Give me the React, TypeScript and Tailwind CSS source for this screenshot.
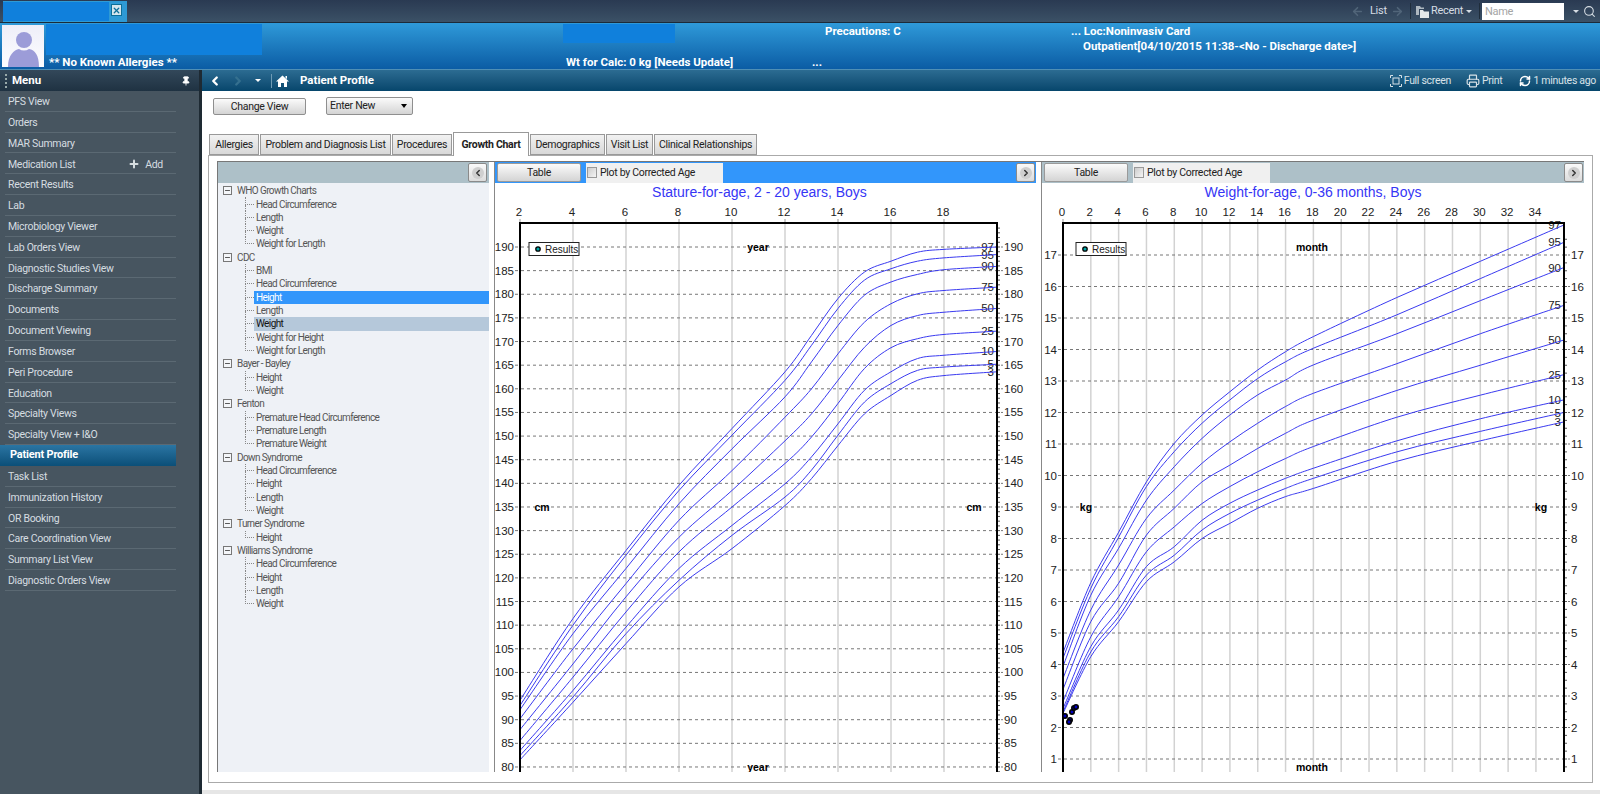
import { ChevronLeft, ChevronRight, Search, Printer, RefreshCw, Pin, ArrowLeft, ArrowRight, Plus, Minus, X } from "lucide-react";

const uiFont = { fontFamily: "Roboto, 'Liberation Sans', sans-serif" };

const menuItems = [
  "PFS View", "Orders", "MAR Summary", "Medication List", "Recent Results", "Lab", "Microbiology Viewer",
  "Lab Orders View", "Diagnostic Studies View", "Discharge Summary", "Documents", "Document Viewing",
  "Forms Browser", "Peri Procedure", "Education", "Specialty Views", "Specialty View + I&O", "Patient Profile",
  "Task List", "Immunization History", "OR Booking", "Care Coordination View", "Summary List View", "Diagnostic Orders View",
];

const tabs = [
  { label: "Allergies", w: "w-[50px]" },
  { label: "Problem and Diagnosis List", w: "w-[131px]" },
  { label: "Procedures", w: "w-[60px]" },
  { label: "Growth Chart", w: "w-[76px]", active: true },
  { label: "Demographics", w: "w-[75px]" },
  { label: "Visit List", w: "w-[47px]" },
  { label: "Clinical Relationships", w: "w-[103px]" },
];

const tree = [
  { name: "WHO Growth Charts", items: ["Head Circumference", "Length", "Weight", "Weight for Length"] },
  { name: "CDC", items: ["BMI", "Head Circumference", "Height", "Length", "Weight", "Weight for Height", "Weight for Length"] },
  { name: "Bayer - Bayley", items: ["Height", "Weight"] },
  { name: "Fenton", items: ["Premature Head Circumference", "Premature Length", "Premature Weight"] },
  { name: "Down Syndrome", items: ["Head Circumference", "Height", "Length", "Weight"] },
  { name: "Turner Syndrome", items: ["Height"] },
  { name: "Williams Syndrome", items: ["Head Circumference", "Height", "Length", "Weight"] },
];

const range = (from: number, to: number, step: number) => {
  const out: number[] = [];
  for (let v = from; v <= to; v += step) out.push(v);
  return out;
};

type Curve = { label: string; values: number[] };

type ChartConfig = {
  left: number;
  right: number;
  xMin: number;
  xScale: number;
  xTicks: number[];
  yRef: number;
  yRefPx: number;
  yScale: number;
  yTicks: number[];
  yMinor: number[];
  ages: number[];
  curves: Curve[];
  xUnit: string;
  xUnitPos: number;
  yUnit: string;
  yUnitLeft: number;
  yUnitRight: number;
  legendX: number;
  viewX: number;
  viewW: number;
  dots?: number[][];
};

// percentile values read off the chart
const stature: ChartConfig = {
  left: 519,
  right: 996,
  xMin: 2,
  xScale: 26.5,
  xTicks: range(2, 18, 2),
  yRef: 190,
  yRefPx: 247,
  yScale: 4.727,
  yTicks: range(80, 190, 5),
  yMinor: range(79, 194, 1),
  ages: [2, 4, 6, 8, 10, 12, 13, 14, 15, 16, 17, 18, 20],
  xUnit: "year",
  xUnitPos: 757,
  yUnit: "cm",
  yUnitLeft: 541,
  yUnitRight: 973,
  legendX: 528,
  viewX: 494,
  viewW: 542,
  curves: [
    { label: "97", values: [94.1, 111.4, 125.8, 139.6, 151.6, 163.6, 171.3, 179.1, 184.7, 187, 188.9, 189.5, 190] },
    { label: "95", values: [93, 110, 124.8, 138.5, 150.2, 161.8, 169.2, 177, 183, 185.4, 187, 187.7, 188.4] },
    { label: "90", values: [92.1, 108.2, 122, 135.7, 147.3, 158.3, 165.7, 173.4, 179.8, 182.6, 184.2, 185.2, 185.9] },
    { label: "75", values: [90.2, 105, 118.8, 132.2, 142.7, 154, 160, 167.4, 174.1, 178, 180.1, 180.8, 181.5] },
    { label: "50", values: [87.9, 101.8, 116, 128.6, 138.5, 149, 154.7, 161.8, 168.8, 173.4, 175.5, 176.2, 177] },
    { label: "25", values: [85.6, 99, 112.8, 125.5, 135, 144.2, 149.8, 156.9, 164.3, 168.7, 170.6, 171.5, 172.2] },
    { label: "10", values: [83.5, 96.2, 109.6, 122, 131.1, 139.9, 145.6, 152.6, 159.7, 163.6, 166.4, 167.1, 167.9] },
    { label: "5", values: [82.4, 94.8, 108.2, 119.5, 129, 137.1, 142.8, 150.2, 157.2, 161.1, 163.9, 164.6, 165.2] },
    { label: "3", values: [81.5, 93.7, 106.1, 118.1, 126.2, 135.3, 141, 148, 154.7, 158.6, 161.8, 162.8, 163.6] },
  ],
};

const weight: ChartConfig = {
  left: 1062,
  right: 1563,
  xMin: 0,
  xScale: 13.91,
  xTicks: range(0, 34, 2),
  yRef: 17,
  yRefPx: 255,
  yScale: 31.5,
  yTicks: range(1, 17, 1),
  yMinor: range(0.5, 17.5, 0.25),
  ages: [0, 2, 4, 6, 8, 10, 12, 14, 16, 18, 24, 30, 36],
  xUnit: "month",
  xUnitPos: 1311,
  yUnit: "kg",
  yUnitLeft: 1085,
  yUnitRight: 1540,
  legendX: 1075,
  viewX: 1041,
  viewW: 543,
  dots: [[1064, 716], [1069, 720], [1068, 722], [1071, 712], [1073, 708], [1075, 707]],
  curves: [
    { label: "97", values: [4.38, 6.6, 8.2, 9.8, 11.02, 11.92, 12.66, 13.35, 13.93, 14.41, 15.65, 16.8, 17.95] },
    { label: "95", values: [4.2, 6.42, 8.04, 9.65, 10.76, 11.66, 12.4, 13.08, 13.61, 14.04, 15.1, 16.25, 17.4] },
    { label: "90", values: [3.94, 6.2, 7.69, 9.22, 10.28, 11.18, 11.92, 12.56, 13.03, 13.51, 14.5, 15.55, 16.6] },
    { label: "75", values: [3.56, 5.73, 7.16, 8.64, 9.54, 10.39, 11.07, 11.66, 12.19, 12.61, 13.55, 14.5, 15.4] },
    { label: "50", values: [3.21, 5.36, 6.58, 8.11, 8.96, 9.8, 10.33, 10.86, 11.34, 11.76, 12.7, 13.5, 14.3] },
    { label: "25", values: [2.82, 4.88, 6.15, 7.58, 8.37, 9.11, 9.65, 10.12, 10.54, 10.92, 11.85, 12.55, 13.2] },
    { label: "10", values: [2.6, 4.57, 5.73, 7.11, 7.74, 8.58, 9.12, 9.54, 9.91, 10.23, 11.1, 11.8, 12.4] },
    { label: "5", values: [2.5, 4.4, 5.52, 6.84, 7.47, 8.27, 8.8, 9.22, 9.59, 9.91, 10.75, 11.4, 12] },
    { label: "3", values: [2.45, 4.25, 5.36, 6.63, 7.26, 8, 8.48, 8.96, 9.33, 9.59, 10.45, 11.1, 11.7] },
  ],
};

// catmull-rom through the points so the curves stay smooth
function smoothPath(pts: number[][]) {
  let d = `M${pts[0][0]} ${pts[0][1]}`;
  for (let i = 0; i < pts.length - 1; i++) {
    const p0 = pts[Math.max(i - 1, 0)];
    const p1 = pts[i];
    const p2 = pts[i + 1];
    const p3 = pts[Math.min(i + 2, pts.length - 1)];
    const c1x = p1[0] + (p2[0] - p0[0]) / 6;
    const c1y = p1[1] + (p2[1] - p0[1]) / 6;
    const c2x = p2[0] - (p3[0] - p1[0]) / 6;
    const c2y = p2[1] - (p3[1] - p1[1]) / 6;
    d += ` C${c1x} ${c1y} ${c2x} ${c2y} ${p2[0]} ${p2[1]}`;
  }
  return d;
}

function Chart({ c }: { c: ChartConfig }) {
  const toX = (v: number) => c.left + (v - c.xMin) * c.xScale;
  const toY = (v: number) => c.yRefPx + (c.yRef - v) * c.yScale;
  const font = "'Liberation Sans', Arial, sans-serif";
  const bottom = 772;
  return (
    <svg width={c.viewW} height={589} viewBox={`${c.viewX} 183 ${c.viewW} 589`} className="block tracking-normal" fontFamily={font}>
      {c.xTicks.map((t) => (
        <g key={t}>
          {t !== c.xMin && <line x1={toX(t)} x2={toX(t)} y1={223} y2={bottom} stroke="#d2d2d2" strokeWidth={1.5} />}
          <line x1={toX(t)} x2={toX(t)} y1={219} y2={223} stroke="#999" />
          <text x={toX(t) - 1} y={216} fontSize={11.5} textAnchor="middle" fill="#222">{t}</text>
        </g>
      ))}
      {c.yMinor.map((t) =>
        toY(t) > 224 && toY(t) < bottom ? (
          <line key={t} x1={c.right} x2={c.right + 3} y1={toY(t)} y2={toY(t)} stroke="#555" />
        ) : null
      )}
      {c.yTicks.map((t) => (
        <g key={t}>
          <line x1={c.left - 5} x2={c.right + 6} y1={toY(t)} y2={toY(t)} stroke="#777" strokeDasharray="3 3" />
          <text x={c.left - 6} y={toY(t) + 4} fontSize={11.5} textAnchor="end" fill="#222">{t}</text>
          <text x={c.right + 7} y={toY(t) + 4} fontSize={11.5} fill="#222">{t}</text>
        </g>
      ))}
      <text x={c.xUnitPos} y={251} fontSize={10.5} fontWeight="bold" textAnchor="middle" fill="#000">{c.xUnit}</text>
      <text x={c.xUnitPos} y={771} fontSize={10.5} fontWeight="bold" textAnchor="middle" fill="#000">{c.xUnit}</text>
      <text x={c.yUnitLeft} y={511} fontSize={10.5} fontWeight="bold" textAnchor="middle" fill="#000">{c.yUnit}</text>
      <text x={c.yUnitRight} y={511} fontSize={10.5} fontWeight="bold" textAnchor="middle" fill="#000">{c.yUnit}</text>
      {c.curves.map((curve) => {
        const pts = c.ages.map((a, i) => [toX(a), toY(curve.values[i])]);
        const last = pts[pts.length - 1];
        return (
          <g key={curve.label}>
            <text x={c.right - 3} y={last[1] + 4} fontSize={11.5} textAnchor="end" fill="#222">{curve.label}</text>
            <path d={smoothPath(pts)} fill="none" stroke="#3a3af0" strokeWidth={1} />
          </g>
        );
      })}
      <path d={`M${c.left} ${bottom} V223 H${c.right} V${bottom}`} fill="none" stroke="#000" strokeWidth={2} />
      <rect x={c.legendX} y={242.5} width={50} height={13} fill="#fff" stroke="#222" />
      <circle cx={c.legendX + 9} cy={249} r={2.2} fill="#0aa" stroke="#000" strokeWidth={1.3} />
      <text x={c.legendX + 16} y={253} fontSize={10} fill="#222">Results</text>
      {c.dots?.map(([x, y], i) => <circle key={i} cx={x} cy={y} r={2.2} fill="#0000c0" stroke="#000" strokeWidth={1.6} />)}
    </svg>
  );
}

function ArrowButton({ dir }: { dir: "left" | "right" }) {
  const Icon = dir === "left" ? ChevronLeft : ChevronRight;
  return (
    <div className="w-[19px] h-[19px] shrink-0 border border-[#8a8a8a] rounded-[2px] bg-gradient-to-b from-[#fafafa] to-[#dcdcdc] flex items-center justify-center">
      <div className="w-[12px] h-[12px] rounded-full bg-[#cfcfcf] flex items-center justify-center">
        <Icon size={10} strokeWidth={3.5} className="text-[#333]" />
      </div>
    </div>
  );
}

function ChartToolbar({ highlight }: { highlight?: boolean }) {
  return (
    <div className={`h-[21px] flex items-center pl-[2px] pr-[1px] ${highlight ? "bg-[#3296fb]" : "bg-[#adc0c8]"}`}>
      <button className="w-[84px] h-[19px] border border-[#9a9a9a] rounded-[2px] bg-gradient-to-b from-[#fbfbfb] to-[#d4d4d4] text-[#222]">Table</button>
      <div className="ml-[5px] w-[137px] h-[20px] bg-[#f0f0f0] flex items-center pl-[1px] gap-[3px]">
        <span className="w-[10px] h-[11px] border border-[#999] bg-gradient-to-br from-[#ccc] to-[#f5f5f5]" />
        <span className="text-[#222] whitespace-nowrap">Plot by Corrected Age</span>
      </div>
      <div className="flex-1" />
      <ArrowButton dir="right" />
    </div>
  );
}

function ChartPanel({ title, c, highlight, className, titleClass }: { title: string; c: ChartConfig; highlight?: boolean; className: string; titleClass: string }) {
  return (
    <div className={`${className} flex flex-col border-l border-[#888]`}>
      <ChartToolbar highlight={highlight} />
      <div>
        <div className={`h-0 text-center ${titleClass}`}>
          <span className="relative top-[1px] text-[14px] tracking-normal leading-[17px] text-[#3636f5]" style={{ fontFamily: "'Liberation Sans', Arial, sans-serif" }}>{title}</span>
        </div>
        <Chart c={c} />
      </div>
    </div>
  );
}

function TreeGroup({ name, items }: { name: string; items: string[] }) {
  return (
    <div>
      <div className="h-[13.33px] flex items-center pl-[5px]">
        <span className="w-[9px] h-[9px] border border-[#777] bg-[#f4f6f9] flex items-center justify-center">
          <Minus size={7} strokeWidth={3} className="text-[#444]" />
        </span>
        <span className="ml-[5px] text-[#555] whitespace-nowrap">{name}</span>
      </div>
      {items.map((item, i) => {
        const selected = name === "CDC" && item === "Height";
        const hover = name === "CDC" && item === "Weight";
        return (
          <div key={item} className="h-[13.33px] flex items-stretch pl-[27px]">
            <div className="w-[9px] flex flex-col shrink-0">
              <div className="flex-1 border-l border-b border-dotted border-[#888]" />
              <div className={`flex-1 ${i < items.length - 1 ? "border-l border-dotted border-[#888]" : ""}`} />
            </div>
            <div className={`flex-1 flex items-center pl-[2px] ${selected ? "bg-[#3296fb] text-white" : hover ? "bg-[#b5c8da] text-[#111]" : "text-[#555]"}`}>
              <span className="whitespace-nowrap">{item}</span>
            </div>
          </div>
        );
      })}
    </div>
  );
}

function Avatar() {
  return (
    <div className="w-[42px] h-[42px] bg-gradient-to-b from-[#eeeef8] to-[#fdfdff] overflow-hidden shrink-0">
      <svg width="42" height="42" viewBox="0 0 42 42">
        <circle cx="22" cy="15" r="8" fill="#9c9cd8" />
        <path d="M6 42 C6 30 12 25 17 24 Q22 27 27 24 C33 25 37 30 37 42 Z" fill="#9c9cd8" />
      </svg>
    </div>
  );
}

function HomeIcon() {
  return (
    <svg width="13" height="12" viewBox="0 0 13 12" className="ml-[4px]">
      <path d="M6.5 0.5 L13 6.5 H11 V12 H8 V8 H5 V12 H2 V6.5 H0 Z M9.5 1 H11 V4 L9.5 2.7 Z" fill="#fff" />
    </svg>
  );
}

function FullScreenIcon() {
  return (
    <svg width="12" height="12" viewBox="0 0 12 12" fill="none" stroke="#d8e2e8">
      <path d="M0.5 3 V0.5 H3 M9 0.5 H11.5 V3 M11.5 9 V11.5 H9 M3 11.5 H0.5 V9" />
      <rect x="3" y="3" width="6" height="6" />
    </svg>
  );
}

function RecentIcon() {
  return (
    <svg width="13" height="13" viewBox="0 0 13 13" className="ml-[5px]">
      <path d="M0 1 H4 L5 2.5 H8 V4 H3 V10 H0 Z" fill="#aeb8c0" />
      <path d="M4 5 H7 L8 6.5 H13 V13 H4 Z" fill="#e4e8ea" />
    </svg>
  );
}

export default function App() {
  return (
    <div className="w-[1600px] h-[794px] overflow-hidden flex flex-col bg-white text-[10.5px] tracking-[-0.3px]" style={uiFont}>
      {/* top strip */}
      <div className="h-[23px] shrink-0 bg-gradient-to-b from-[#2a3a52] to-[#3b5166] border-b border-[#1c2a38] flex items-end pl-[3px]">
        <div className="w-[124px] h-[21px] bg-[#2e9ad5] flex items-start pt-[1px]">
          <div className="w-[106px] h-[19px] bg-[#1080dc]" />
          <div className="ml-[2px] mt-[2px] w-[11px] h-[12px] bg-[#d5e6ee] border border-[#0d6f99] flex items-center justify-center">
            <X size={9} strokeWidth={3.5} className="text-[#0d6f99]" />
          </div>
        </div>
        <div className="flex-1" />
        <div className="h-[22px] flex items-center text-[#d6dde3] text-[11px]">
          <ArrowLeft size={13} strokeWidth={3} className="text-[#516579]" />
          <span className="ml-[6px] w-[16px]">List</span>
          <ArrowRight size={13} strokeWidth={3} className="ml-[5px] text-[#516579]" />
          <span className="ml-[6px] h-[16px] border-l border-[#1f2d3b]" />
          <RecentIcon />
          <span className="ml-[2px] w-[31px]">Recent</span>
          <span className="ml-[4px] border-x-[3px] border-t-[3px] border-x-transparent border-t-[#d6dde3]" />
          <span className="ml-[7px] h-[16px] border-l border-[#1f2d3b]" />
          <div className="ml-[2px] w-[82px] h-[17px] bg-white text-[#a5a5a5] pl-[3px] leading-[17px]">Name</div>
          <span className="ml-[9px] border-x-[3px] border-t-[3px] border-x-transparent border-t-[#d6dde3]" />
          <Search size={13} strokeWidth={2} className="ml-[4px] mr-[4px]" />
        </div>
      </div>

      {/* patient banner */}
      <div className="h-[47px] shrink-0 bg-gradient-to-b from-[#2f9ad9] to-[#0b5ca4] border-b border-[#4f8fb5] flex text-white font-bold text-[11.5px] tracking-normal leading-[14px]">
        <div className="pl-[2px] pt-[2px]"><Avatar /></div>
        <div className="ml-[2px] w-[517px] flex flex-col justify-between">
          <div className="w-[216px] h-[31px] mt-[1px] bg-[#1080dc]" />
          <span className="pl-[3px]">** No Known Allergies **</span>
        </div>
        <div className="w-[249px] flex flex-col justify-between">
          <div className="w-[112px] h-[19px] mt-[1px] bg-[#1080dc]" />
          <span className="pl-[3px]">Wt for Calc: 0 kg [Needs Update]</span>
        </div>
        <div className="w-[259px] flex flex-col justify-between">
          <span className="pl-[13px] pt-[1px]">Precautions: C</span>
          <span>...</span>
        </div>
        <div className="flex flex-col">
          <span className="pt-[1px]">... Loc:Noninvasiv Card</span>
          <span className="pl-[12px] pt-[1px]">Outpatient[04/10/2015 11:38-&lt;No - Discharge date&gt;]</span>
        </div>
      </div>

      <div className="flex-1 flex min-h-0">
        {/* left menu */}
        <aside className="w-[202px] shrink-0 bg-[#475560] border-r-[3px] border-[#1e2a33] flex flex-col">
          <div className="h-[21px] shrink-0 bg-gradient-to-b from-[#33485a] to-[#1f3242] flex items-center text-white font-bold text-[11.5px] tracking-normal">
            <span className="ml-[5px] h-[14px] border-l-2 border-dotted border-[#9aa]" />
            <span className="ml-[5px] flex-1">Menu</span>
            <Pin size={10} className="mr-[8px]" fill="#fff" />
          </div>
          {menuItems.map((item) =>
            item === "Patient Profile" ? (
              <div key={item} className="h-[20.83px] shrink-0 w-[176px] bg-gradient-to-b from-[#2a75a3] to-[#0b4f78] flex items-center pl-[10px] text-white font-bold text-[11px] tracking-[-0.2px]">
                {item}
              </div>
            ) : (
              <div key={item} className="h-[20.83px] shrink-0 w-[171px] ml-[5px] border-b border-[#5b6973] flex items-center pl-[3px] pt-[2px] text-[#d6dde0]">
                <span className="flex-1">{item}</span>
                {item === "Medication List" && (
                  <span className="flex items-center gap-[5px] mr-[13px]">
                    <Plus size={12} strokeWidth={4} className="text-[#d6dde0]" />Add
                  </span>
                )}
              </div>
            )
          )}
        </aside>

        <main className="flex-1 min-w-0 flex flex-col">
          {/* nav bar */}
          <div className="h-[21px] shrink-0 bg-gradient-to-b from-[#2c6c92] to-[#06466c] flex items-center text-[#d8e2e8]">
            <ChevronLeft size={14} strokeWidth={4} className="ml-[6px] text-white" />
            <ChevronRight size={14} strokeWidth={4} className="ml-[9px] text-[#35708f]" />
            <span className="ml-[10px] border-x-[3px] border-t-[3px] border-x-transparent border-t-white" />
            <span className="ml-[10px] h-[14px] border-l border-[#6f9bb4]" />
            <HomeIcon />
            <span className="ml-[11px] text-white font-bold text-[11.5px] tracking-normal">Patient Profile</span>
            <div className="flex-1" />
            <FullScreenIcon />
            <span className="ml-[2px]">Full screen</span>
            <Printer size={14} className="ml-[15px]" />
            <span className="ml-[2px]">Print</span>
            <RefreshCw size={12} strokeWidth={3} className="ml-[17px] text-white" />
            <span className="ml-[2px] mr-[4px]">1 minutes ago</span>
          </div>

          <div className="flex-1 flex flex-col pl-[6px] pr-[7px] min-h-0">
            <div className="h-[18px] mt-[6px] flex items-center pl-[5px] shrink-0">
              <button className="w-[93px] h-[17px] border border-[#8f8f8f] rounded-[2px] bg-gradient-to-b from-[#fbfbfb] to-[#d4d4d4] text-[#222]">Change View</button>
              <div className="ml-[20px] w-[87px] h-[18px] border border-[#8f8f8f] rounded-[2px] bg-gradient-to-b from-[#fbfbfb] to-[#d4d4d4] flex items-center pl-[3px] text-[#222]">
                <span className="flex-1">Enter New</span>
                <span className="mr-[5px] border-x-[3px] border-t-[4px] border-x-transparent border-t-black" />
              </div>
            </div>

            {/* tabs */}
            <div className="h-[24px] mt-[16px] flex items-end gap-[1px] pl-[1px] shrink-0">
              {tabs.map((t) =>
                t.active ? (
                  <div key={t.label} className={`${t.w} h-[24px] bg-white border border-b-0 border-[#999] -mb-[1px] z-10 flex items-center justify-center font-bold text-[#222] whitespace-nowrap`}>
                    {t.label}
                  </div>
                ) : (
                  <div key={t.label} className={`${t.w} h-[21px] bg-gradient-to-b from-[#f2f2f2] to-[#d8d8d8] border border-[#999] flex items-center justify-center text-[#222] whitespace-nowrap`}>
                    {t.label}
                  </div>
                )
              )}
            </div>

            {/* content panel */}
            <div className="h-[628px] shrink-0 border border-[#aaa] pl-[8px] pr-[8px] pt-[5px]">
              <div className="flex items-start h-[611px] border-t border-[#777]">
                <div className="w-[272px] h-full shrink-0 border-l border-[#777] flex flex-col bg-[#eef1f6]">
                  <div className="h-[21px] shrink-0 bg-[#adc0c8] flex items-center justify-end pr-[2px]">
                    <ArrowButton dir="left" />
                  </div>
                  <div className="pt-[1px] text-[10px] tracking-[-0.6px]">
                    {tree.map((g) => <TreeGroup key={g.name} name={g.name} items={g.items} />)}
                  </div>
                </div>
                <div className="w-[5px] shrink-0" />
                <ChartPanel title="Stature-for-age, 2 - 20 years, Boys" c={stature} highlight className="w-[542px] shrink-0" titleClass="pr-[12px]" />
                <div className="w-[5px] shrink-0" />
                <ChartPanel title="Weight-for-age, 0-36 months, Boys" c={weight} className="w-[543px] shrink-0" titleClass="" />
              </div>
            </div>
          </div>
          <div className="h-[4px] shrink-0 bg-[#e6e6e6] mt-auto" />
        </main>
      </div>
    </div>
  );
}
